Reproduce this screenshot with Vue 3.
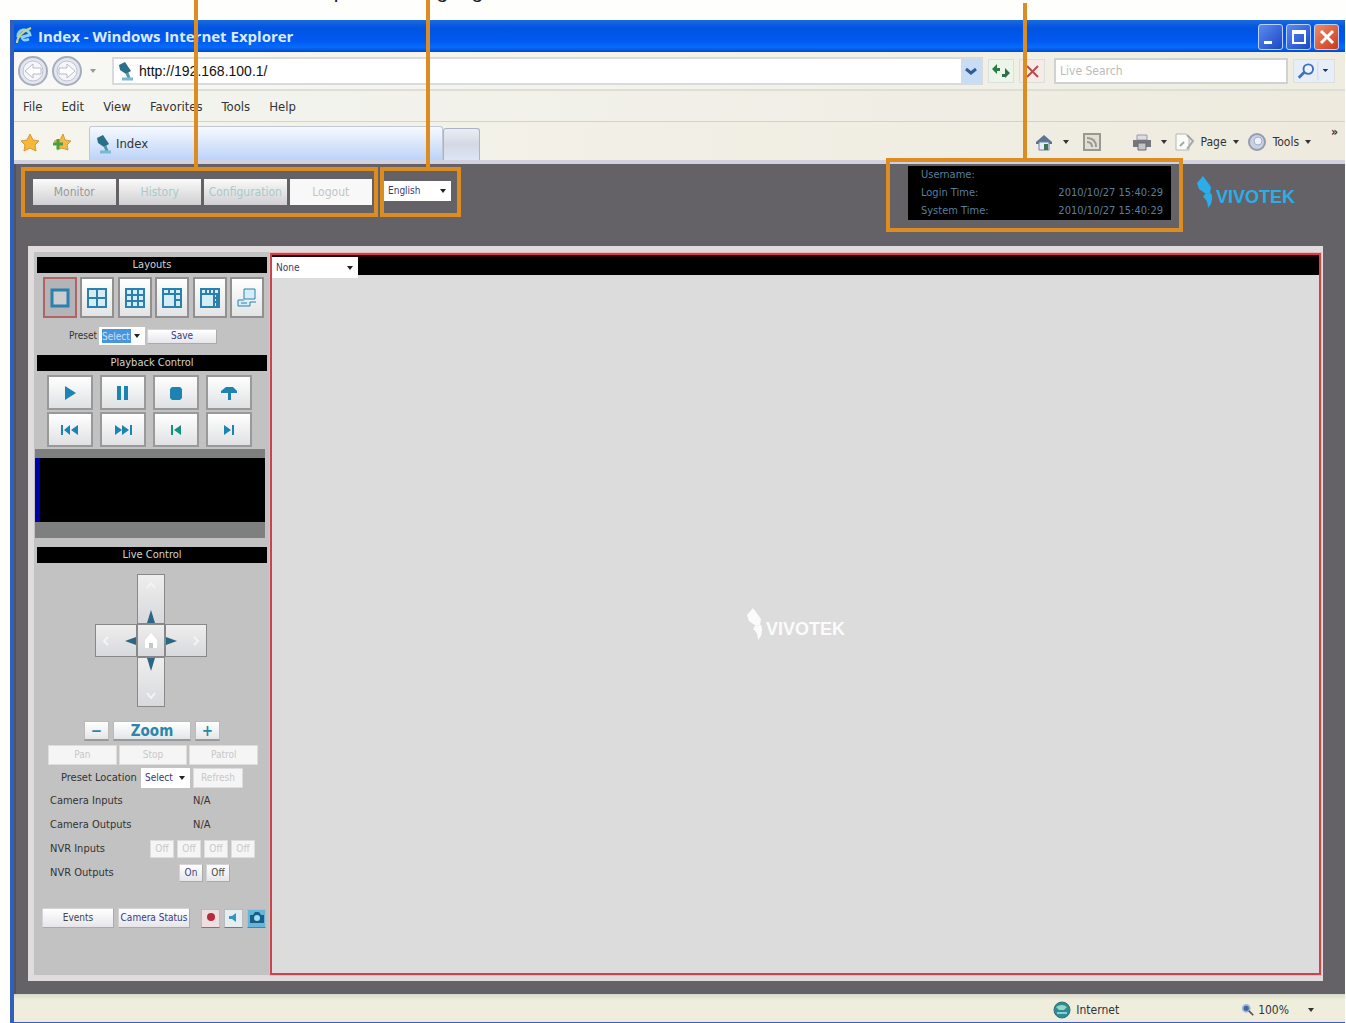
<script setup>
import { ref } from 'vue'

const language = ref('English')
const channel = ref('None')
const preset = ref('Select')
const location = ref('Select')
const address = ref('http://192.168.100.1/')

const menus = ['File', 'Edit', 'View', 'Favorites', 'Tools', 'Help']
const tabs = [
  { label: 'Monitor', kind: 'current' },
  { label: 'History', kind: 'teal' },
  { label: 'Configuration', kind: 'teal' },
  { label: 'Logout', kind: 'plain' },
]

const layouts = [
  { name: 'Single view', d: 'M3 3H19V19H3Z', w: 3 },
  { name: '2 x 2 view', d: 'M2 2H20V20H2ZM11 2V20M2 11H20', w: 2 },
  { name: '3 x 3 view', d: 'M2 2H20V20H2ZM8 2V20M14 2V20M2 8H20M2 14H20', w: 2 },
  { name: '1 + 5 view', d: 'M2 2H20V20H2ZM2 7H20M8 2V7M14 2V20M14 13H20', w: 2 },
  { name: '1 + 7 view', d: 'M2 2H20V20H2ZM2 7H20M7 2V7M11 2V7M15 2V20M18 7V20M15 11H20M15 15H20', w: 2 },
  { name: 'Full screen', d: 'M8 2H19V12H8ZM2 13V19H14V15H20M2 13H8M5 16H11', w: 1 },
]

const playback = [
  { name: 'Play', d: 'M6 4L17 11L6 18Z' },
  { name: 'Pause', d: 'M5 4H9V18H5ZM12 4H16V18H12Z' },
  { name: 'Stop', d: 'M7 5H15L17 7V16L15 18H7L5 16V7Z' },
  { name: 'Seek', d: 'M3 9L8 5H15L19 9V11H13V18H10V11H3Z' },
  { name: 'Previous', d: 'M2 6H4V16H2ZM11 6V16L5 11ZM19 6V16L12 11Z' },
  { name: 'Next', d: 'M18 6H20V16H18ZM3 6L10 11L3 16ZM10 6L17 11L10 16Z' },
  { name: 'Step back', d: 'M6 6H8V16H6ZM16 6V16L9 11Z', green: true },
  { name: 'Step forward', d: 'M14 6H16V16H14ZM6 6L13 11L6 16Z' },
]
</script>

<template>
  <div class="sheet">
    <div class="caption"><span>Drop-down language</span></div>
    <div class="window">
      <header class="titlebar">
        <svg class="ie" viewBox="0 0 20 20"><path d="M3 11A6 6 0 1 1 15 9L7 11Q8 16 14 13" fill="none" stroke="#8fd0f4" stroke-width="3" /><path d="M2 17Q2 8 16 2" fill="none" stroke="#c8d67c" stroke-width="2" /></svg>
        <h1>Index - Windows Internet Explorer</h1>
        <div class="controls">
          <button aria-label="Minimize"><svg viewBox="0 0 22 22"><path d="M4 15H12V18H4Z" fill="#fff" /></svg></button>
          <button aria-label="Maximize"><svg viewBox="0 0 22 22"><path d="M5 5H17V17H5ZM5 7H17" fill="none" stroke="#fff" stroke-width="2" /></svg></button>
          <button class="close" aria-label="Close"><svg viewBox="0 0 22 22"><path d="M5 5L17 17M17 5L5 17" stroke="#fff" stroke-width="3" /></svg></button>
        </div>
      </header>

      <div class="navbar">
        <button class="round" aria-label="Back"><svg viewBox="0 0 30 30"><circle cx="15" cy="15" r="14" fill="#e3e6ee" stroke="#a7adbb" stroke-width="2" /><circle cx="15" cy="15" r="10" fill="#f5f6fa" stroke="#c0c4d0" /><path d="M15 8L7 15L15 22V18H23V12H15Z" fill="#fff" stroke="#b5bac8" /></svg></button>
        <button class="round" aria-label="Forward"><svg viewBox="0 0 30 30"><circle cx="15" cy="15" r="14" fill="#e3e6ee" stroke="#a7adbb" stroke-width="2" /><circle cx="15" cy="15" r="10" fill="#f5f6fa" stroke="#c0c4d0" /><path d="M15 8L23 15L15 22V18H7V12H15Z" fill="#fff" stroke="#b5bac8" /></svg></button>
        <i class="caret pale"></i>
        <div class="address">
          <svg class="cam" viewBox="0 0 18 20"><path d="M2 4L8 1L14 10L9 13L3 9Z" fill="#2a7089" /><path d="M10 12L12 17" stroke="#4b9ab0" stroke-width="3" /><path d="M5 18H16" stroke="#79bad0" stroke-width="3" /></svg>
          <input v-model="address" aria-label="Address">
          <button class="drop" aria-label="Show addresses"><svg viewBox="0 0 20 20"><path d="M5 8L10 12L15 8" fill="none" stroke="#315b9b" stroke-width="3" /></svg></button>
        </div>
        <button class="tool green" aria-label="Refresh"><svg viewBox="0 0 24 22"><path d="M3 9L8 4V8H11V11H8V14Z" fill="#277b45" /><path d="M21 13L16 18V17H13V14H16V8Z" fill="#2d6f4a" /></svg></button>
        <button class="tool red" aria-label="Stop"><svg viewBox="0 0 24 22"><path d="M7 6L18 17M18 6L7 17" stroke="#b44f4b" stroke-width="2" /></svg></button>
        <input class="search" placeholder="Live Search" aria-label="Live Search">
        <button class="tool go" aria-label="Search"><svg viewBox="0 0 42 22"><circle cx="15" cy="9" r="5" fill="#edf4ff" stroke="#416fc0" stroke-width="2" /><path d="M11 12L5 18" stroke="#416fc0" stroke-width="3" /><path d="M25 1V21" stroke="#d0d8e2" /><path d="M30 9H36L33 12Z" fill="#183565" /></svg></button>
      </div>

      <nav class="menubar"><a v-for="m in menus" :key="m" href="#">{{ m }}</a></nav>

      <div class="tabbar">
        <button class="fav" aria-label="Favorites"><svg viewBox="0 0 20 20"><path d="M10 1L13 7L19 8L15 12L16 18L10 15L4 18L5 12L1 8L7 7Z" fill="#f6b839" stroke="#d99434" /></svg></button>
        <button class="fav" aria-label="Add to favorites"><svg viewBox="0 0 20 20"><path d="M11 1L13 7L19 8L15 12L16 17L10 15L5 17L6 12L2 8L8 7Z" fill="#f2bb45" stroke="#d29b3f" /><path d="M6 6V16M1 11H11" stroke="#4a9f42" stroke-width="3" /></svg></button>
        <a class="tab" href="#"><svg class="cam" viewBox="0 0 18 20"><path d="M2 4L8 1L14 10L9 13L3 9Z" fill="#2a7089" /><path d="M10 12L12 17" stroke="#4b9ab0" stroke-width="3" /><path d="M5 18H16" stroke="#79bad0" stroke-width="3" /></svg>Index</a>
        <button class="newtab" aria-label="New tab"></button>
        <div class="commands">
          <button aria-label="Home"><svg viewBox="0 0 20 20"><path d="M2 10L10 3L18 10V12H2Z" fill="#5c7392" /><path d="M5 10H15V18H5Z" fill="#e7edf6" stroke="#6a83ac" /><path d="M10 12H14V18H10Z" fill="#3f7352" /></svg><i class="caret"></i></button>
          <button class="feeds" aria-label="Feeds"><svg viewBox="0 0 20 20"><path d="M2 2H18V18H2ZM5 6Q14 6 14 15M5 10Q10 10 10 15" fill="#e1dfd5" stroke="#9a9990" stroke-width="2" /></svg></button>
          <button class="print" aria-label="Print"><svg viewBox="0 0 20 20"><path d="M5 3H15V8H5Z" fill="#dedee2" stroke="#9a9aa2" /><path d="M1 8H19V15H1Z" fill="#77757d" /><path d="M6 11H14V18H6Z" fill="#c3c3c8" stroke="#686870" /></svg><i class="caret"></i></button>
          <button class="page"><svg viewBox="0 0 20 20"><path d="M1 2H11L14 5V18H1Z" fill="#fbfbf6" stroke="#b6b6b6" /><path d="M12 3L18 9L12 17M5 14L9 10" fill="none" stroke="#a3a8af" stroke-width="2" /></svg>Page<i class="caret"></i></button>
          <button class="gear"><svg viewBox="0 0 20 20"><circle cx="10" cy="10" r="8" fill="#cbd1e3" stroke="#969bb0" stroke-width="2" /><circle cx="11" cy="9" r="4" fill="#eef1f8" stroke="#a5adc7" /></svg>Tools<i class="caret"></i></button>
          <button class="more" aria-label="More">»</button>
        </div>
      </div>

      <main class="page-body">
        <div class="top">
          <nav class="callout tabs"><button v-for="t in tabs" :key="t.label" :class="t.kind">{{ t.label }}</button></nav>
          <div class="callout lang">
            <label class="picker"><select v-model="language" aria-label="Language"><option>English</option></select></label>
          </div>
          <div class="callout info">
            <dl>
              <dt>Username:</dt><dd></dd>
              <dt>Login Time:</dt><dd>2010/10/27 15:40:29</dd>
              <dt>System Time:</dt><dd>2010/10/27 15:40:29</dd>
            </dl>
          </div>
          <div class="logo"><svg viewBox="0 0 20 36"><path d="M1 8L7 1L15 12L14 18L10 19L3 14Z" /><path d="M9 19L15 18Q17 22 15 29L12 33Q12 25 7 22Z" /></svg><b>VIVOTEK</b></div>
        </div>

        <div class="panel">
          <aside>
            <h2>Layouts</h2>
            <div class="layouts">
              <button v-for="(l, i) in layouts" :key="l.name" :aria-label="l.name" :class="{ on: i === 0 }">
                <svg viewBox="0 0 22 22"><path :d="l.d" fill="#d5edf7" stroke="#2c80ad" :stroke-width="l.w" /></svg>
              </button>
            </div>
            <div class="preset">
              <label for="preset">Preset</label>
              <span class="picker marked"><select id="preset" v-model="preset"><option>Select</option></select></span>
              <button class="btn">Save</button>
            </div>
            <h2>Playback Control</h2>
            <div class="playback">
              <button v-for="p in playback" :key="p.name" :aria-label="p.name"><svg viewBox="0 0 22 22"><path :d="p.d" :fill="p.green ? '#16917e' : '#1c83b3'" /></svg></button>
            </div>
            <div class="timeline"><div></div></div>
            <h2>Live Control</h2>
            <div class="pad">
              <button class="up" aria-label="Tilt up"><svg viewBox="0 0 28 50"><path d="M10 14L14 9L18 14" fill="none" stroke="#f4f4f4" stroke-width="2" /><path d="M10 49L14 36L18 49Z" fill="#2b6684" /></svg></button>
              <button class="left" aria-label="Pan left"><svg viewBox="0 0 42 32"><path d="M13 12L9 16L13 20" fill="none" stroke="#f4f4f4" stroke-width="2" /><path d="M41 12L30 16L41 20Z" fill="#2b6684" /></svg></button>
              <button class="home" aria-label="Home position"><svg viewBox="0 0 28 32"><path d="M8 15L14 8L20 15V23H8Z" fill="#fff" /><path d="M12 18H16V23H12Z" fill="#c3c6ca" /></svg></button>
              <button class="right" aria-label="Pan right"><svg viewBox="0 0 42 32"><path d="M29 12L33 16L29 20" fill="none" stroke="#f4f4f4" stroke-width="2" /><path d="M1 12L12 16L1 20Z" fill="#2b6684" /></svg></button>
              <button class="down" aria-label="Tilt down"><svg viewBox="0 0 28 50"><path d="M10 36L14 41L18 36" fill="none" stroke="#f4f4f4" stroke-width="2" /><path d="M10 1L14 14L18 1Z" fill="#2b6684" /></svg></button>
            </div>
            <div class="zoom"><button aria-label="Zoom out">−</button><button class="wide">Zoom</button><button aria-label="Zoom in">+</button></div>
            <div class="modes"><button class="btn off">Pan</button><button class="btn off">Stop</button><button class="btn off">Patrol</button></div>
            <div class="location">
              <label for="location">Preset Location</label>
              <span class="picker"><select id="location" v-model="location"><option>Select</option></select></span>
              <button class="btn off">Refresh</button>
            </div>
            <div class="row"><span>Camera Inputs</span><span class="value">N/A</span></div>
            <div class="row"><span>Camera Outputs</span><span class="value">N/A</span></div>
            <div class="row"><span>NVR Inputs</span><div class="set"><button v-for="n in 4" :key="n" class="btn off">Off</button></div></div>
            <div class="row"><span>NVR Outputs</span><div class="set outs"><button class="btn">On</button><button class="btn dark">Off</button></div></div>
            <div class="actions">
              <button class="btn dark">Events</button><button class="btn">Camera Status</button>
              <button class="mini rec" aria-label="Record"><svg viewBox="0 0 18 18"><circle cx="9" cy="8" r="4" fill="#b62b3d" /></svg></button>
              <button class="mini" aria-label="Audio"><svg viewBox="0 0 18 18"><path d="M4 7H7L11 4V13L7 10H4Z" fill="#3295b9" /></svg></button>
              <button class="mini snap" aria-label="Snapshot"><svg viewBox="0 0 18 18"><path d="M2 6H5L7 3H11L13 6H16V14H2Z" fill="#155f8a" /><circle cx="9" cy="9" r="3" fill="#a5dcf0" /></svg></button>
            </div>
          </aside>

          <section class="viewer">
            <div class="viewbar"><label class="picker"><select v-model="channel" aria-label="Channel"><option>None</option></select></label></div>
            <div class="screen">
              <div class="logo white"><svg viewBox="0 0 20 36"><path d="M1 8L7 1L15 12L14 18L10 19L3 14Z" /><path d="M9 19L15 18Q17 22 15 29L12 33Q12 25 7 22Z" /></svg><b>VIVOTEK</b></div>
            </div>
          </section>
        </div>
      </main>

      <footer class="status">
        <span class="zone"><svg viewBox="0 0 18 18"><circle cx="9" cy="9" r="8" fill="#2f8c91" stroke="#347080" /><path d="M3 6Q9 2 14 6L11 9H6Z" fill="#93d9c1" /><path d="M4 12H14" stroke="#8bcbe3" stroke-width="2" /></svg>Internet</span>
        <button class="scale"><svg viewBox="0 0 16 16"><circle cx="6" cy="6" r="4" fill="#47679b" stroke="#9eb6df" stroke-width="2" /><path d="M9 9L14 14" stroke="#4c5766" stroke-width="2" /></svg>100%<i class="caret"></i></button>
      </footer>
    </div>
  </div>
</template>

<style>
body { margin: 0; background: #fefffd; }
</style>

<style scoped>
* { box-sizing: border-box; }
.sheet { display: flex; flex-direction: column; min-height: 100vh; overflow: hidden; font: 11px/16px "DejaVu Sans Condensed", "DejaVu Sans", "Noto Sans", sans-serif; color: #333; }
button, input, select { font: inherit; color: inherit; margin: 0; padding: 0; border: 0; }
button { background: none; display: flex; align-items: center; justify-content: center; }
a { color: inherit; text-decoration: none; }
svg { display: block; flex: none; }
.caption { height: 20px; overflow: hidden; padding-left: 300px; }
.caption span { display: block; margin-top: -20px; font: 21px/22px "Liberation Sans", Arial, sans-serif; color: #222; }
.window { flex: 1; display: flex; flex-direction: column; margin: 0 1px 0 10px; border: solid #315fba; border-width: 0 0 1px 4px; background: #f0efe3; }

.titlebar { display: flex; align-items: center; height: 32px; padding: 0 6px 0 1px; background: linear-gradient(#1a6ae0, #0054df 25%, #0059f2 65%, #066cfa 85%, #0049d0); color: #dcecff; }
.ie { width: 20px; height: 20px; }
h1 { margin: 0 auto 0 3px; font: bold 15px/20px "Open Sans", "Noto Sans", sans-serif; white-space: nowrap; }
.controls { display: flex; gap: 3px; padding-top: 2px; }
.controls button { width: 25px; height: 26px; border: 1px solid #b9d2ff; border-radius: 3px; background: linear-gradient(135deg, #5c8af0, #1b48c4); }
.controls .close { background: linear-gradient(135deg, #ee8b6c, #c93a18); }
.controls svg { width: 22px; height: 22px; }

.navbar { display: flex; align-items: center; height: 39px; padding: 0 10px 0 4px; border-bottom: 2px solid #dfded6; background: linear-gradient(90deg, #f8f8f6, #eeede0); }
.round { width: 30px; height: 30px; margin-right: 4px; }
.round svg { width: 30px; height: 30px; }
.caret { flex: none; border: 3px solid transparent; border-top: 4px solid #333; border-bottom: 0; }
.caret.pale { margin: 0 16px 0 4px; border-top-color: #999; }
.address { flex: 1; display: flex; align-items: center; height: 28px; border: 2px solid #d9dadd; background: #fff; padding-left: 3px; }
.cam { width: 18px; height: 20px; }
.address input { flex: 1; min-width: 0; margin-left: 4px; font: 14px/20px "Liberation Sans", Arial, sans-serif; color: #111; background: none; outline: 0; }
.drop { width: 20px; height: 24px; background: #c8dcf4; }
.drop svg { width: 20px; height: 20px; }
.tool { height: 24px; border: 1px solid #dcdfdc; margin-left: 5px; }
.tool svg { width: 24px; height: 22px; }
.green { background: #edf4e9; }
.red { background: #f6ebe8; }
.search { width: 234px; height: 26px; margin-left: 9px; padding: 0 4px; border: 2px solid #d0d1d2; background: #fff; font-size: 12px; outline: 0; }
.search::placeholder { color: #bbb; opacity: 1; }
.tool.go { background: #e7eef7; }
.tool.go svg { width: 40px; }

.menubar { display: flex; align-items: center; gap: 19px; height: 31px; padding: 2px 0 0 9px; border-bottom: 1px solid #d4d3cb; font-size: 13px; background: linear-gradient(90deg, #f4f5f1, #eeeade); }
.tabbar { display: flex; align-items: flex-end; height: 42px; padding: 4px 7px 0 6px; border-bottom: 4px solid #d1d2dd; background: linear-gradient(90deg, #f5f5ed, #eeeade); font-size: 13px; }
.fav { align-self: center; width: 20px; height: 24px; margin-right: 12px; }
.fav svg { width: 20px; height: 20px; }
.tab { display: flex; align-items: center; gap: 3px; width: 354px; height: 34px; margin-left: 5px; padding-left: 5px; border: 1px solid #c1c8d4; border-bottom: 0; border-radius: 3px 3px 0 0; background: linear-gradient(#f6faff, #bcd3f8); }
.newtab { width: 37px; height: 32px; border: 1px solid #adb3c0; border-bottom: 0; border-radius: 3px 3px 0 0; background: linear-gradient(#e9eef5, #d3d8e4 50%, #dce6f7); }
.commands { display: flex; align-items: center; height: 36px; margin-left: auto; font-size: 12px; }
.commands button { gap: 9px; height: 24px; }
.commands svg { width: 20px; height: 20px; }
.commands .feeds { margin-left: 13px; }
.commands .print { margin-left: 30px; }
.commands .page { gap: 6px; margin-left: 8px; }
.commands .gear { gap: 6px; margin-left: 8px; }
.commands .more { align-self: flex-start; margin-left: 20px; height: 16px; font-weight: bold; }

.page-body { flex: 1; display: flex; flex-direction: column; padding: 0 22px 13px 12px; background: #646266; border-left: 2px solid #4b5662; }
.top { display: flex; align-items: flex-start; height: 82px; margin-left: -7px; padding-top: 3px; }
.callout { position: relative; border: 4px solid #dd8c22; }
.callout::before { content: ""; position: absolute; bottom: 100%; width: 4px; background: #dd8c22; }
.tabs { display: flex; gap: 3px; width: 357px; height: 50px; padding: 8px 2px 8px 8px; }
.tabs::before { left: 169px; height: 171px; }
.tabs button { flex: 1; height: 26px; font-size: 12px; background: linear-gradient(#fafafa, #d0d0d3); color: #999; min-width: 0; }
.tabs .teal { color: #a6cbc6; }
.tabs .plain { background: #f8f8f8; color: #c4c4c4; }
.lang { width: 81px; height: 50px; margin-left: 2px; padding: 10px 6px 0 0; }
.lang::before { left: 42px; height: 171px; }
.picker { position: relative; display: block; background: #fff; color: #3b3a6e; }
.picker::after { content: ""; position: absolute; right: 5px; top: 50%; margin-top: -2px; border: 3px solid transparent; border-top: 4px solid #222; border-bottom: 0; pointer-events: none; }
.picker select { display: block; width: 100%; height: 100%; padding-left: 4px; appearance: none; background: none; outline: 0; }
.lang .picker { height: 20px; font-size: 10px; }
.info { width: 297px; height: 74px; margin: -9px 0 0 auto; padding: 4px 8px 0 18px; }
.info::before { left: 133px; height: 159px; }
dl { display: grid; grid-template-columns: auto auto; align-content: start; justify-content: space-between; height: 54px; margin: 0; padding: 0 8px 0 13px; background: #000; color: #587f9e; line-height: 18px; }
dd { margin: 0; }
.logo { display: flex; align-items: flex-start; color: #2badea; }
.logo svg { width: 20px; height: 36px; fill: currentColor; }
.logo b { height: 36px; padding-top: 11px; font: bold 18px/22px "Liberation Sans", Arial, sans-serif; }
.top .logo { margin: 8px 28px 0 13px; }

.panel { flex: 1; display: flex; border: solid #e0dcde; border-width: 6px 2px 6px 6px; background: #c2c2c2; }
aside { display: flex; flex-direction: column; width: 234px; flex: none; padding: 5px 0 0; }
h2 { margin: 0 1px 0 3px; height: 16px; background: #000; color: #d2d2d2; font: inherit; text-align: center; flex: none; }
.layouts { display: flex; justify-content: space-between; margin: 4px 4px 0 9px; }
.layouts button { width: 34px; height: 41px; border: 2px solid #909090; background: linear-gradient(#fff, #e2e4e5); }
.layouts .on { border-color: #b06464; background: #b3b3b8; }
.layouts svg { width: 22px; height: 22px; }
.layouts .on path { fill: #cccdd0; }
.btn { height: 20px; border: 1px solid #d3d3d6; border-right-color: #aaa; border-bottom-color: #aaa; background: linear-gradient(#fff, #e6e6ea); color: #3b3a80; white-space: nowrap; }
.btn.off { background: #f5f5f5; color: #c8c8c8; border-color: #ddd; }
.btn.dark { color: #444; }
.preset { display: flex; align-items: center; margin: 9px 0 10px 35px; font-size: 10px; }
.preset .picker { width: 46px; height: 18px; margin-left: 2px; }
.preset .btn { width: 70px; height: 15px; margin-left: 2px; }
.marked { padding: 2px 14px 2px 3px; }
.marked select { background: #4995dc; color: #c5e2ff; padding: 0; }
.playback { display: grid; grid-template-columns: repeat(4, 46px); justify-content: space-between; gap: 2px 0; margin: 4px 16px 2px 13px; }
.playback button { height: 35px; border: 2px solid #999; background: linear-gradient(#fff, #e0e1e3); }
.playback svg { width: 22px; height: 22px; }
.timeline { height: 89px; margin: 0 3px 9px 1px; padding: 9px 0 16px; background: #7e7f7f; }
.timeline div { height: 64px; border-left: 5px solid #0000a8; background: #000; }
.pad { display: grid; grid-template-columns: 42px 28px 42px; grid-template-rows: 50px 33px 50px; justify-content: center; margin: 11px 0 14px; }
.pad button { border: 1px solid #888; background: linear-gradient(#eee, #d8d9dc); overflow: hidden; }
.up { grid-area: 1 / 2; }
.left { grid-area: 2 / 1; }
.home { grid-area: 2 / 2; }
.right { grid-area: 2 / 3; }
.down { grid-area: 3 / 2; }
.up svg, .down svg { width: 28px; height: 50px; }
.left svg, .right svg { width: 42px; height: 32px; }
.home svg { width: 28px; height: 32px; }
.zoom { display: flex; gap: 4px; margin-left: 50px; }
.zoom button { width: 25px; height: 20px; border: 1px solid #bbb; border-bottom: 2px solid #999; background: linear-gradient(#fff, #e3e6e8); color: #2a86ad; font-weight: bold; font-size: 15px; }
.zoom .wide { width: 78px; }
.modes { display: flex; gap: 2px; margin: 4px 10px 3px 14px; }
.modes .btn { flex: 1; font-size: 10px; }
.location { display: flex; align-items: center; margin: 0 25px 1px 27px; }
.location label { flex: 1; white-space: nowrap; }
.location .picker { width: 49px; height: 20px; font-size: 10px; }
.location .btn { width: 50px; margin-left: 3px; font-size: 10px; }
.row { display: flex; align-items: center; justify-content: space-between; height: 24px; margin: 0 13px 0 16px; }
.value { width: 62px; }
.set { display: flex; gap: 3px; }
.set .btn { width: 24px; height: 18px; font-size: 10px; }
.set.outs { margin-right: 25px; }
.actions { display: flex; align-items: center; gap: 4px; margin: 23px 2px 0 8px; }
.actions .btn { width: 72px; font-size: 10px; }
.mini { width: 19px; height: 19px; border: 1px solid #bbb; border-bottom-color: #777; background: #e4eef1; }
.mini svg { width: 18px; height: 18px; }
.rec { margin-left: 7px; background: #eedfe1; }
.snap { background: #66b6d9; }

.viewer { flex: 1; display: flex; flex-direction: column; margin: 1px 0 0 2px; border: 2px solid #cc434b; outline: 1px solid #eeb9bf; background: #dcdcdc; }
.viewbar { height: 21px; padding-top: 2px; background: linear-gradient(#3a0c10, #000 3px, #000 20px, #dcdcdc 20px); }
.viewbar .picker { width: 86px; height: 21px; font-size: 10px; }
.screen { flex: 1; display: flex; align-items: center; justify-content: center; }
.white { color: #fbfbfb; }

.status { display: flex; align-items: center; height: 28px; padding: 4px 31px 0 0; background: linear-gradient(#d8d8cd, #efeedb 6px, #efecdd); font-size: 12px; }
.zone { display: flex; align-items: center; gap: 5px; margin-left: auto; }
.zone svg { width: 18px; height: 18px; }
.scale { gap: 3px; margin-left: 122px; }
.scale svg { width: 14px; height: 16px; }
.scale .caret { margin-left: 16px; }
</style>
